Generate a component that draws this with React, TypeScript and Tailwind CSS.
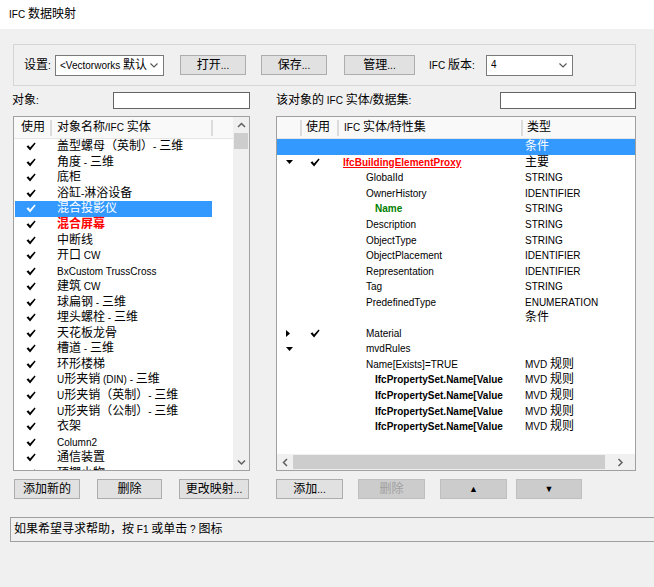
import type { ReactNode } from "react";

// CJK runs are drawn at 12px, Latin runs at 10px (mimics the YaHei UI look)
const CJK_RE = /([\u2E80-\u9FFF\uFF00-\uFFEF\u3000-\u303F]+)/;

function T({ s }: { s: string }) {
  const parts = s.split(CJK_RE);
  return (
    <span className="whitespace-pre">
      {parts.map((p, i) =>
        p === "" ? null : CJK_RE.test(p) ? (
          <span key={i} className="text-[12px]">{p}</span>
        ) : (
          <span key={i}>{p}</span>
        )
      )}
    </span>
  );
}

function Check({ white = false }: { white?: boolean }) {
  return (
    <svg width="10" height="9" viewBox="0 0 10 9" className="shrink-0">
      <path d="M0.5 4.6 L2.4 3.2 L4 5.4 L8.6 0.4 L9.6 1.4 L4.1 8.6 Z" fill={white ? "#ffffff" : "#000000"} />
    </svg>
  );
}

function TriDown() {
  return (
    <svg width="7" height="4" viewBox="0 0 7 4">
      <polygon points="0,0 7,0 3.5,4" fill="#000" />
    </svg>
  );
}

function TriRight() {
  return (
    <svg width="4" height="7" viewBox="0 0 4 7">
      <polygon points="0,0 4,3.5 0,7" fill="#000" />
    </svg>
  );
}

function Chevron({ dir }: { dir: "up" | "down" | "left" | "right" }) {
  const pts = {
    up: "1,5 4.5,1.5 8,5",
    down: "1,1.5 4.5,5 8,1.5",
    left: "5,1 1.5,4.5 5,8",
    right: "1.5,1 5,4.5 1.5,8",
  }[dir];
  const w = dir === "up" || dir === "down" ? 9 : 7;
  const h = dir === "up" || dir === "down" ? 7 : 9;
  return (
    <svg width={w} height={h} viewBox={`0 0 ${w} ${h}`}>
      <polyline points={pts} fill="none" stroke="#606060" strokeWidth="1.5" />
    </svg>
  );
}

function Btn({ w, children, disabled = false, dark = false }: { w: string; children: ReactNode; disabled?: boolean; dark?: boolean }) {
  return (
    <div
      className={`${w} h-[20px] border flex items-center justify-center ${
        disabled ? "bg-[#cccccc] border-[#bfbfbf] text-[#a0a0a0]" : dark ? "bg-[#cccccc] border-[#bfbfbf]" : "bg-[#e1e1e1] border-[#adadad]"
      }`}
    >
      {children}
    </div>
  );
}

function Select({ w, value }: { w: string; value: string }) {
  return (
    <div className={`${w} h-[21px] bg-white border border-[#7a7a7a] flex items-center pl-[4px] pr-[5px] overflow-hidden`}>
      <div className="flex-1 whitespace-nowrap overflow-hidden"><T s={value} /></div>
      <svg width="8" height="5" viewBox="0 0 8 5" className="shrink-0 ml-[3px]">
        <polyline points="0.5,0.5 4,4 7.5,0.5" fill="none" stroke="#555" strokeWidth="1.1" />
      </svg>
    </div>
  );
}

const leftRows = [
  "盖型螺母（英制）- 三维",
  "角度 - 三维",
  "底柜",
  "浴缸-淋浴设备",
  "混合投影仪",
  "混合屏幕",
  "中断线",
  "开口 CW",
  "BxCustom TrussCross",
  "建筑 CW",
  "球扁钢 - 三维",
  "埋头螺栓 - 三维",
  "天花板龙骨",
  "槽道 - 三维",
  "环形楼梯",
  "U形夹销 (DIN) - 三维",
  "U形夹销（英制）- 三维",
  "U形夹销（公制）- 三维",
  "衣架",
  "Column2",
  "通信装置",
  "顶棚小物",
];

type RRow = {
  name: string;
  type: string;
  level: 0 | 1 | 2 | 3;
  tri?: "down" | "right";
  check?: boolean;
  style?: "entity" | "green" | "bold";
  sel?: boolean;
};

const rightRows: RRow[] = [
  { name: "", type: "条件", level: 0, sel: true },
  { name: "IfcBuildingElementProxy", type: "主要", level: 1, tri: "down", check: true, style: "entity" },
  { name: "GlobalId", type: "STRING", level: 2 },
  { name: "OwnerHistory", type: "IDENTIFIER", level: 2 },
  { name: "Name", type: "STRING", level: 3, style: "green" },
  { name: "Description", type: "STRING", level: 2 },
  { name: "ObjectType", type: "STRING", level: 2 },
  { name: "ObjectPlacement", type: "IDENTIFIER", level: 2 },
  { name: "Representation", type: "IDENTIFIER", level: 2 },
  { name: "Tag", type: "STRING", level: 2 },
  { name: "PredefinedType", type: "ENUMERATION", level: 2 },
  { name: "", type: "条件", level: 2 },
  { name: "Material", type: "", level: 2, tri: "right", check: true },
  { name: "mvdRules", type: "", level: 2, tri: "down" },
  { name: "Name[Exists]=TRUE", type: "MVD 规则", level: 2 },
  { name: "IfcPropertySet.Name[Value", type: "MVD 规则", level: 3, style: "bold" },
  { name: "IfcPropertySet.Name[Value", type: "MVD 规则", level: 3, style: "bold" },
  { name: "IfcPropertySet.Name[Value", type: "MVD 规则", level: 3, style: "bold" },
  { name: "IfcPropertySet.Name[Value", type: "MVD 规则", level: 3, style: "bold" },
];

function LeftList() {
  return (
    <div className="w-[237px] h-[355px] bg-white border border-[#a0a0a0] flex">
      <div className="w-[219px] flex flex-col overflow-hidden">
        <div className="h-[22px] shrink-0 flex items-center border-b border-[#e5e5e5] bg-[#f9f9f9]">
          <div className="w-[36px] pl-[7px]"><T s="使用" /></div>
          <div className="w-[2px] h-[16px] bg-[#dcdcdc]" />
          <div className="w-[159px] pl-[5px]"><T s="对象名称/IFC 实体" /></div>
          <div className="w-[2px] h-[16px] bg-[#dcdcdc]" />
        </div>
        {leftRows.map((r, i) => {
          const sel = i === 4;
          const red = i === 5;
          return (
            <div key={i} className="h-[15.55px] shrink-0 flex items-center leading-[15px]">
              <div className={`ml-[1px] w-[197px] h-full flex items-center ${sel ? "bg-[#3399ff] text-white" : ""}`}>
                <div className="w-[42px] pl-[11px] flex items-center"><Check white={sel} /></div>
                <div className={`whitespace-nowrap ${red ? "text-[#ff0000] font-bold" : ""}`}><T s={r} /></div>
              </div>
            </div>
          );
        })}
      </div>
      <div className="w-[16px] bg-[#f0f0f0] flex flex-col">
        <div className="h-[16px] flex items-center justify-center"><Chevron dir="up" /></div>
        <div className="h-[16px] mx-[1px] bg-[#cdcdcd]" />
        <div className="flex-1" />
        <div className="h-[16px] flex items-center justify-center"><Chevron dir="down" /></div>
      </div>
    </div>
  );
}

function RightList() {
  const indent = { 0: "pl-[6px]", 1: "pl-[6px]", 2: "pl-[29px]", 3: "pl-[38px]" } as const;
  return (
    <div className="w-[360px] h-[355px] bg-white border border-[#a0a0a0] flex flex-col overflow-hidden">
      <div className="h-[22px] shrink-0 flex items-center border-b border-[#e5e5e5] bg-[#f9f9f9]">
        <div className="w-[23px]" />
        <div className="w-[2px] h-[16px] bg-[#dcdcdc]" />
        <div className="w-[35px] pl-[4px]"><T s="使用" /></div>
        <div className="w-[2px] h-[16px] bg-[#dcdcdc]" />
        <div className="w-[182px] pl-[5px]"><T s="IFC 实体/特性集" /></div>
        <div className="w-[2px] h-[16px] bg-[#dcdcdc]" />
        <div className="pl-[4px]"><T s="类型" /></div>
      </div>
      <div className="flex-1 flex flex-col">
        {rightRows.map((r, i) => (
          <div key={i} className={`h-[15.55px] shrink-0 flex items-center leading-[15px] ${r.sel ? "bg-[#3399ff] text-white" : ""}`}>
            <div className="w-[24px] pl-[9px] flex items-center">
              {r.tri === "down" ? <TriDown /> : r.tri === "right" ? <TriRight /> : null}
            </div>
            <div className="w-[36px] pl-[9px] flex items-center">{r.check ? <Check /> : null}</div>
            <div
              className={`w-[183px] whitespace-nowrap overflow-hidden ${indent[r.level]} ${
                r.style === "entity"
                  ? "text-[#ff0000] font-bold underline"
                  : r.style === "green"
                  ? "text-[#008000] font-bold"
                  : r.style === "bold"
                  ? "font-bold"
                  : ""
              }`}
            >
              {r.name}
            </div>
            <div className="pl-[5px] whitespace-nowrap"><T s={r.type} /></div>
          </div>
        ))}
      </div>
      <div className="h-[16px] shrink-0 bg-[#f0f0f0] flex items-center">
        <div className="w-[16px] h-full flex items-center justify-center"><Chevron dir="left" /></div>
        <div className="w-[312px] h-[14px] bg-[#cdcdcd]" />
        <div className="flex-1 h-full flex items-center justify-center"><Chevron dir="right" /></div>
      </div>
    </div>
  );
}

export default function App() {
  return (
    <div
      className="w-[654px] h-[587px] bg-[#f0f0f0] overflow-hidden text-[10px] text-black leading-[14px]"
      style={{ fontFamily: '"Liberation Sans", "Noto Sans CJK SC", sans-serif' }}
    >
      <div className="h-[29px] bg-white flex items-center pl-[9px]"><T s="IFC 数据映射" /></div>

      <div className="ml-[13px] mt-[15px] w-[623px] h-[42px] border border-[#d5d5d5] flex items-center pl-[10px]">
        <div className="w-[31px]"><T s="设置:" /></div>
        <Select w="w-[109px]" value="<Vectorworks 默认i" />
        <div className="ml-[16px]"><Btn w="w-[66px]"><T s="打开..." /></Btn></div>
        <div className="ml-[15px]"><Btn w="w-[66px]"><T s="保存..." /></Btn></div>
        <div className="ml-[17px]"><Btn w="w-[71px]"><T s="管理..." /></Btn></div>
        <div className="ml-[14px] w-[57px]"><T s="IFC 版本:" /></div>
        <Select w="w-[87px]" value="4" />
      </div>

      <div className="mt-[6px] h-[17px] flex items-center">
        <div className="ml-[12px] w-[238px] flex items-center justify-between">
          <T s="对象:" />
          <div className="w-[137px] h-[17px] bg-white border border-[#646464]" />
        </div>
        <div className="ml-[26px] w-[360px] flex items-center justify-between">
          <T s="该对象的 IFC 实体/数据集:" />
          <div className="w-[136px] h-[17px] bg-white border border-[#646464]" />
        </div>
      </div>

      <div className="mt-[7px] ml-[13px] flex gap-[26px]">
        <LeftList />
        <RightList />
      </div>

      <div className="mt-[8px] flex">
        <div className="ml-[14px]"><Btn w="w-[66px]"><T s="添加新的" /></Btn></div>
        <div className="ml-[17px]"><Btn w="w-[65px]"><T s="删除" /></Btn></div>
        <div className="ml-[17px]"><Btn w="w-[70px]"><T s="更改映射..." /></Btn></div>
        <div className="ml-[27px]"><Btn w="w-[67px]"><T s="添加..." /></Btn></div>
        <div className="ml-[15px]"><Btn w="w-[67px]" disabled><T s="删除" /></Btn></div>
        <div className="ml-[15px]"><Btn w="w-[67px]" dark><span className="text-[9px]">▲</span></Btn></div>
        <div className="ml-[9px]"><Btn w="w-[66px]" dark><span className="text-[9px]">▼</span></Btn></div>
      </div>

      <div className="mt-[18px] ml-[10px] w-[650px] h-[25px] border border-[#a0a0a0] flex items-center pl-[3px]">
        <T s="如果希望寻求帮助，按 F1 或单击 ? 图标" />
      </div>
    </div>
  );
}
